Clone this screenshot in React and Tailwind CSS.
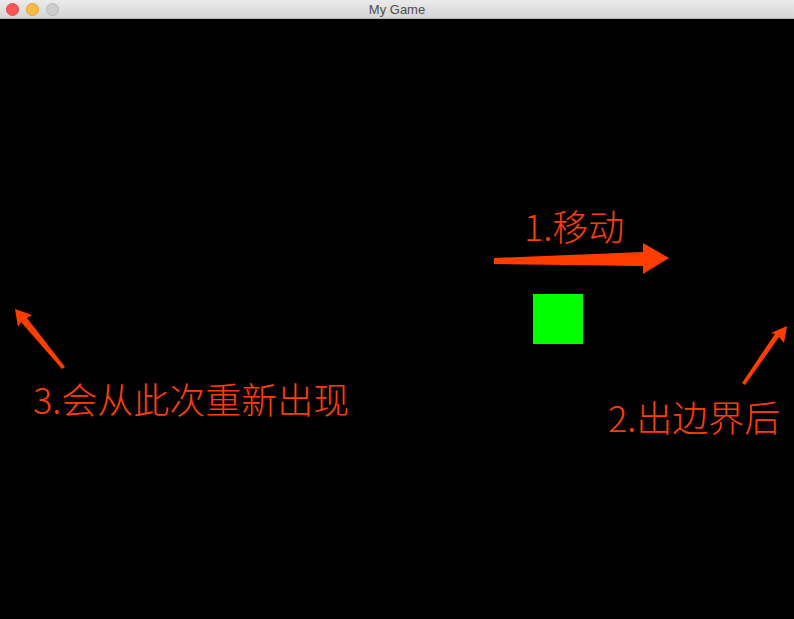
const RED = '#ff3d00';

function TitleBar() {
    return (
        <div className="relative h-[19px] shrink-0 flex items-center bg-gradient-to-b from-[#ebebeb] to-[#d5d5d5] border-b border-[#b5b5b5]">
            {/* window buttons */}
            <div className="flex items-center gap-[7px] pl-[6px]">
                <span className="w-[13px] h-[13px] rounded-full bg-[#fc5753] border border-[#df4744]" />
                <span className="w-[13px] h-[13px] rounded-full bg-[#fdbc40] border border-[#de9f34]" />
                <span className="w-[13px] h-[13px] rounded-full bg-[#cdcdcd] border border-[#b9b9b9]" />
            </div>
            <div className="absolute inset-0 flex items-center justify-center text-[13px] leading-none text-[#4d4d4d] font-['Liberation_Sans','Noto_Sans',sans-serif]">
                My Game
            </div>
        </div>
    );
}

function Label({ children, className }) {
    return (
        <div
            className={`absolute whitespace-nowrap text-[36px] leading-none text-[#ff3d0a] font-['Noto_Sans_CJK_SC',sans-serif] font-light ${className}`}
        >
            {children}
        </div>
    );
}

export default function App() {
    return (
        <div className="w-[794px] h-[619px] flex flex-col bg-black overflow-hidden">
            <TitleBar />

            {/* game canvas */}
            <div className="relative flex-1 bg-black">
                <svg className="absolute inset-0" width="794" height="600" viewBox="0 19 794 600">
                    {/* 1. move right */}
                    <polygon fill={RED} points="494,258 643,252 643,243 669,258 643,274 643,266 494,264" />
                    {/* 2. leaving the edge */}
                    <polygon fill={RED} points="787,326 784,343 779,337 745,385 742,383 775,334 771,333" />
                    {/* 3. reappear on the left */}
                    <polygon fill={RED} points="15,309 32,315 27,318 65,367 62,369 21,322 18,327" />
                </svg>

                {/* player block */}
                <div className="absolute left-[533px] top-[275px] w-[50px] h-[50px] bg-[#00ff00]" />

                <Label className="left-[524px] top-[188px]">1.移动</Label>
                <Label className="left-[608px] top-[379px]">2.出边界后</Label>
                <Label className="left-[33px] top-[361px]">3.会从此次重新出现</Label>
            </div>
        </div>
    );
}
